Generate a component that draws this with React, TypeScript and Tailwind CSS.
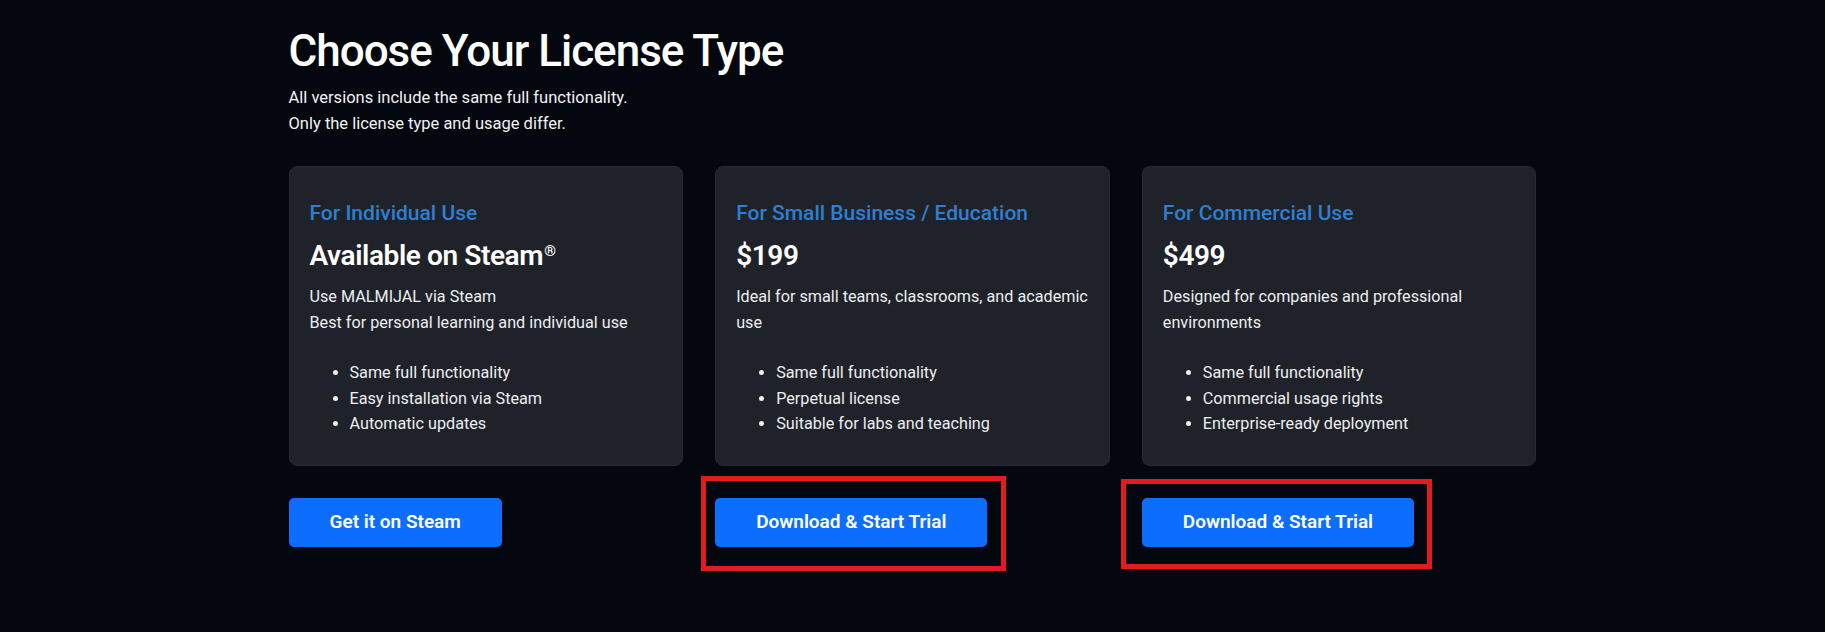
import { Fragment } from "react";

type Plan = {
  audience: string;
  title: string;
  mark?: string;
  lines: string[];
  features: string[];
  cta: string;
  flagged?: { top: number; right: number; bottom: number; left: number };
};

const plans: Plan[] = [
  {
    audience: "For Individual Use",
    title: "Available on Steam",
    mark: "®",
    lines: ["Use MALMIJAL via Steam", "Best for personal learning and individual use"],
    features: ["Same full functionality", "Easy installation via Steam", "Automatic updates"],
    cta: "Get it on Steam",
  },
  {
    audience: "For Small Business / Education",
    title: "$199",
    lines: ["Ideal for small teams, classrooms, and academic use"],
    features: ["Same full functionality", "Perpetual license", "Suitable for labs and teaching"],
    cta: "Download & Start Trial",
    flagged: { top: 22, right: 19, bottom: 24, left: 14 },
  },
  {
    audience: "For Commercial Use",
    title: "$499",
    lines: ["Designed for companies and professional environments"],
    features: ["Same full functionality", "Commercial usage rights", "Enterprise-ready deployment"],
    cta: "Download & Start Trial",
    flagged: { top: 19, right: 18, bottom: 22, left: 21 },
  },
];

function PlanCard({ plan }: { plan: Plan }) {
  return (
    <div className="rounded-lg border border-[#272a31] bg-[#1f2229] px-[20px] pt-[34px] pb-[28px]">
      <h3 className="text-[21px] leading-[1.2] font-medium text-[#2f7fd1]">{plan.audience}</h3>
      <h2 className="mt-3 text-[28px] leading-[1.2] font-semibold tracking-[-0.4px] text-white">
        {plan.title}
        {plan.mark && <span className="ml-[1px] align-[0.55em] text-[15px] leading-none">{plan.mark}</span>}
      </h2>
      <p className="mt-3 text-[16.2px] leading-[25.5px] text-[#eceef1]">
        {plan.lines.map((line, i) => (
          <Fragment key={i}>
            {i > 0 && <br />}
            {line}
          </Fragment>
        ))}
      </p>
      <ul className="mt-[25px] list-disc pl-10 text-[16.2px] leading-[25.5px] text-[#eceef1]">
        {plan.features.map((f) => (
          <li key={f}>{f}</li>
        ))}
      </ul>
    </div>
  );
}

function PlanButton({ plan }: { plan: Plan }) {
  const box = plan.flagged;
  return (
    <div className="relative justify-self-start">
      <button className="h-[49px] rounded-[5px] bg-[#0d6efd] px-[41px] text-[19px] font-semibold text-white">
        {plan.cta}
      </button>
      {box && (
        <span
          className="pointer-events-none absolute border-[5px] border-[#e11b1f]"
          style={{ top: -box.top, right: -box.right, bottom: -box.bottom, left: -box.left }}
        />
      )}
    </div>
  );
}

export default function App() {
  return (
    <div
      className="min-h-[632px] w-full bg-[#04070e] text-white"
      style={{ fontFamily: "Roboto, 'Noto Sans', sans-serif" }}
    >
      <div className="mx-auto w-[1248px] pt-[24px]">
        <h1 className="text-[44px] leading-[1.25] font-medium tracking-[-1px]">Choose Your License Type</h1>
        <p className="mt-[6px] text-[16.5px] leading-[1.56] text-[#f1f2f4]">
          All versions include the same full functionality.
          <br />
          Only the license type and usage differ.
        </p>

        <div className="mt-[30px] grid grid-cols-3 gap-8">
          {plans.map((p) => (
            <PlanCard key={p.audience} plan={p} />
          ))}
        </div>

        <div className="mt-8 grid grid-cols-3 gap-8">
          {plans.map((p) => (
            <PlanButton key={p.audience} plan={p} />
          ))}
        </div>
      </div>
    </div>
  );
}
